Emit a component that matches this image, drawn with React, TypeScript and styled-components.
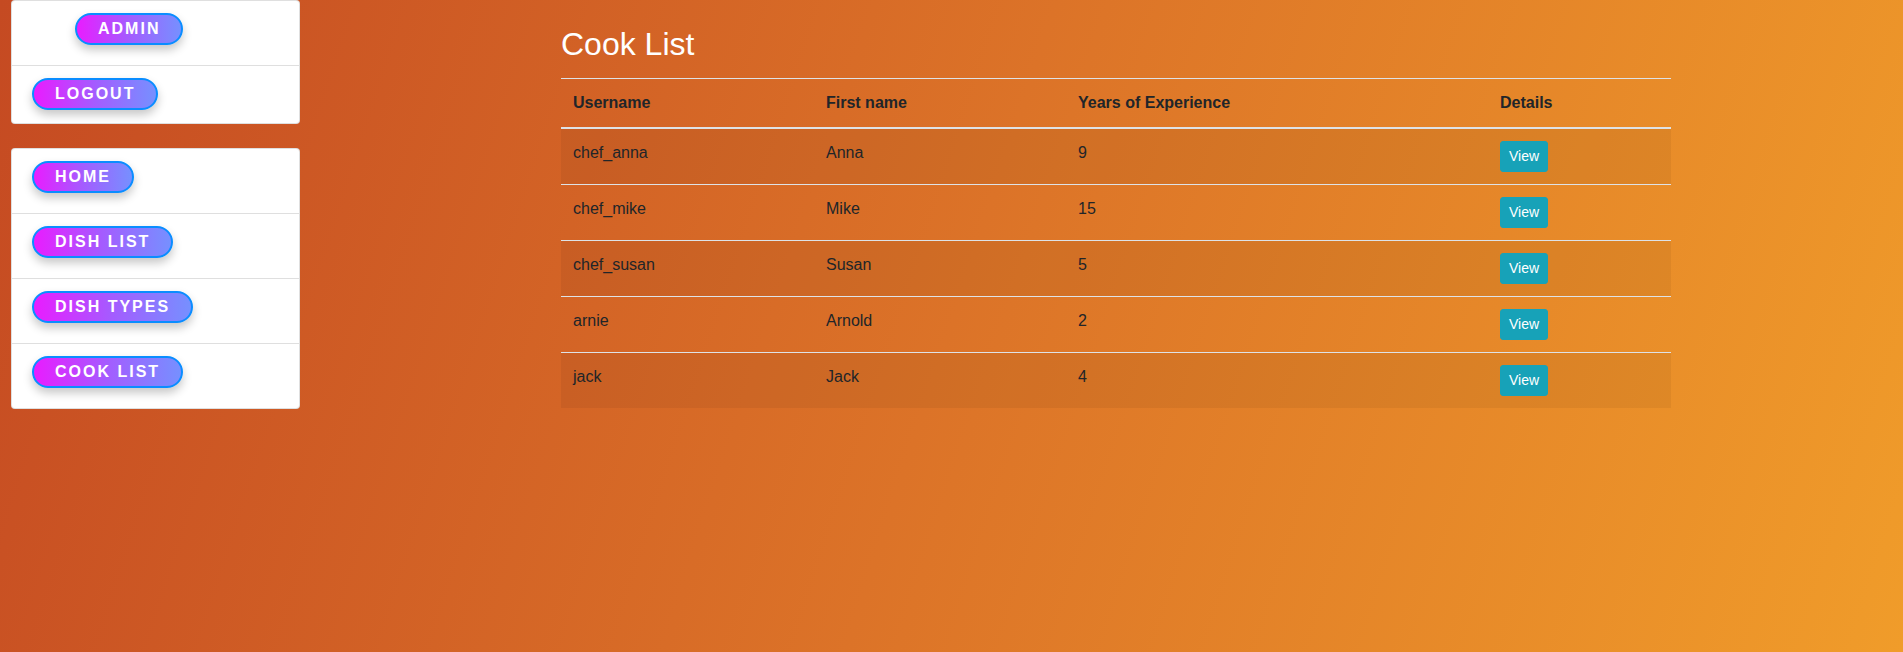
import React from 'react';
import styled, { createGlobalStyle } from 'styled-components';

const GlobalStyle = createGlobalStyle`
  * { box-sizing: border-box; }
  html, body { margin: 0; padding: 0; }
  body {
    min-height: 100vh;
    font-family: "Liberation Sans", Arial, sans-serif;
    font-size: 16px;
    line-height: 1.5;
    color: #212529;
    background: linear-gradient(108deg, #c54a22 0%, #dc7328 50%, #f09c2a 100%);
    background-attachment: fixed;
  }
`;

const Page = styled.div`
  display: flex;
  align-items: flex-start;
  min-height: 100vh;
`;

const Sidebar = styled.aside`
  width: 289px;
  margin-left: 11px;
  display: flex;
  flex-direction: column;
  gap: 24px;
`;

const Card = styled.ul`
  list-style: none;
  margin: 0;
  padding: 0;
  background: #fff;
  border: 1px solid rgba(0, 0, 0, 0.125);
  border-radius: 4px;
`;

const Item = styled.li<{ $indent?: number; $bottom?: number }>`
  padding: 12px 20px ${p => p.$bottom ?? 20}px ${p => 20 + (p.$indent ?? 0)}px;
  border-top: 1px solid rgba(0, 0, 0, 0.125);
  &:first-child { border-top: none; }
  display: flex;
`;

const PillButton = styled.a`
  display: inline-flex;
  align-items: center;
  height: 32px;
  padding: 0 21px;
  border: 2px solid #0a8dff;
  border-radius: 16px;
  background: linear-gradient(90deg, #e91cff 0%, #a45cff 50%, #7690ff 100%);
  color: #fff;
  font-family: "Liberation Sans", Arial, sans-serif;
  font-weight: 700;
  font-size: 16px;
  letter-spacing: 2px;
  text-transform: uppercase;
  text-decoration: none;
  box-shadow: 0 5px 10px rgba(0, 0, 0, 0.22);
  cursor: pointer;
`;

const Main = styled.main`
  margin-left: 261px;
  width: 1110px;
`;

const Title = styled.h2`
  margin: 25px 0 15px;
  font-size: 32px;
  font-weight: 400;
  line-height: 1.2;
  color: #fff;
`;

const Table = styled.table`
  width: 100%;
  border-collapse: collapse;
  table-layout: fixed;
  color: #212529;
`;

const Th = styled.th`
  text-align: left;
  font-weight: 700;
  padding: 12px;
  border-top: 1px solid #dee2e6;
  border-bottom: 2px solid #dee2e6;
  vertical-align: bottom;
`;

const Row = styled.tr<{ $striped: boolean }>`
  background: ${p => (p.$striped ? 'rgba(0, 0, 0, 0.05)' : 'transparent')};
`;

const Td = styled.td`
  padding: 12px;
  border-top: 1px solid #dee2e6;
  vertical-align: top;
`;

const ViewButton = styled.a`
  display: inline-block;
  padding: 4px 8px;
  font-size: 14px;
  line-height: 1.5;
  color: #fff;
  background: #17a2b8;
  border: 1px solid #17a2b8;
  border-radius: 3px;
  text-decoration: none;
  cursor: pointer;
`;

const cooks = [
  { username: 'chef_anna', first: 'Anna', years: 9 },
  { username: 'chef_mike', first: 'Mike', years: 15 },
  { username: 'chef_susan', first: 'Susan', years: 5 },
  { username: 'arnie', first: 'Arnold', years: 2 },
  { username: 'jack', first: 'Jack', years: 4 },
];

const navLinks = ['Home', 'Dish list', 'Dish types', 'Cook list'];

export default function App() {
  return (
    <>
      <GlobalStyle />
      <Page>
        <Sidebar>
          <Card>
            <Item $indent={43} $bottom={20}>
              <PillButton>Admin</PillButton>
            </Item>
            <Item $bottom={13}>
              <PillButton>Logout</PillButton>
            </Item>
          </Card>
          <Card>
            {navLinks.map(link => (
              <Item key={link}>
                <PillButton>{link}</PillButton>
              </Item>
            ))}
          </Card>
        </Sidebar>
        <Main>
          <Title>Cook List</Title>
          <Table>
            <colgroup>
              <col style={{ width: 253 }} />
              <col style={{ width: 252 }} />
              <col style={{ width: 422 }} />
              <col style={{ width: 183 }} />
            </colgroup>
            <thead>
              <tr>
                <Th>Username</Th>
                <Th>First name</Th>
                <Th>Years of Experience</Th>
                <Th>Details</Th>
              </tr>
            </thead>
            <tbody>
              {cooks.map((c, i) => (
                <Row key={c.username} $striped={i % 2 === 0}>
                  <Td>{c.username}</Td>
                  <Td>{c.first}</Td>
                  <Td>{c.years}</Td>
                  <Td>
                    <ViewButton>View</ViewButton>
                  </Td>
                </Row>
              ))}
            </tbody>
          </Table>
        </Main>
      </Page>
    </>
  );
}
